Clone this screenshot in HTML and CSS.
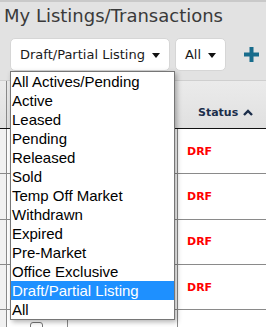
FILE: index.html
```html
<!DOCTYPE html>
<html lang="en">
<head>
    <meta charset="UTF-8">
    <title>My Listings/Transactions</title>
    <link rel="stylesheet" href="styles.css">
</head>
<body>

    <div class="topbar"></div>
    <h1 class="title">My Listings/Transactions</h1>

    <!-- Filter toolbar -->
    <div class="toolbar">
        <button class="drop">Draft/Partial Listing <span class="caret"></span></button>
        <button class="drop">All <span class="caret"></span></button>
        <svg class="add" width="15" height="15" viewBox="0 0 15 15">
            <rect x="5.5" y="0" width="4" height="15" fill="#186c8c"/>
            <rect x="0" y="5.5" width="15" height="4" fill="#186c8c"/>
        </svg>
    </div>

    <!-- Listings grid -->
    <div class="grid">
        <div class="row head">
            <div class="cell c0"></div>
            <div class="cell c1"></div>
            <div class="cell c2"></div>
            <div class="cell c3">
                Status
                <svg class="sort" width="10" height="7" viewBox="0 0 10 7">
                    <polyline points="1,6 5,2 9,6" fill="none" stroke="#1c2e4a" stroke-width="2.4"/>
                </svg>
            </div>
        </div>
        <div class="row">
            <div class="cell c0"></div><div class="cell c1"></div><div class="cell c2"></div>
            <div class="cell c3 status">DRF</div>
        </div>
        <div class="row">
            <div class="cell c0"></div><div class="cell c1"></div><div class="cell c2"></div>
            <div class="cell c3 status">DRF</div>
        </div>
        <div class="row">
            <div class="cell c0"></div><div class="cell c1"></div><div class="cell c2"></div>
            <div class="cell c3 status">DRF</div>
        </div>
        <div class="row">
            <div class="cell c0"></div><div class="cell c1"></div><div class="cell c2"></div>
            <div class="cell c3 status">DRF</div>
        </div>
        <div class="row last">
            <div class="cell c0"></div>
            <div class="cell c1"><span class="check"></span></div>
            <div class="cell c2"></div>
            <div class="cell c3"></div>
        </div>
    </div>

    <!-- Open status list -->
    <ul class="listbox">
        <li>All Actives/Pending</li>
        <li>Active</li>
        <li>Leased</li>
        <li>Pending</li>
        <li>Released</li>
        <li>Sold</li>
        <li>Temp Off Market</li>
        <li>Withdrawn</li>
        <li>Expired</li>
        <li>Pre-Market</li>
        <li>Office Exclusive</li>
        <li class="selected">Draft/Partial Listing</li>
        <li>All</li>
    </ul>

</body>
</html>
```

FILE: styles.css
```css
/* Global Styles */
body {
    margin: 0;
    background-color: #e2e2e2;
    font-family: 'DejaVu Sans', Verdana, sans-serif;
    overflow: hidden;
    height: 327px;
    position: relative;
}

.topbar {
    height: 2px;
    background-color: #c9c9c9;
}

.title {
    margin: 3px 0 0 4px;
    font-size: 18px;
    line-height: 21px;
    font-weight: normal;
    color: #3a3a3a;
}

/* Toolbar */
.toolbar {
    display: flex;
    align-items: center;
    gap: 5px;
    margin-top: 12px;
    padding-left: 10px;
}

.drop {
    height: 33px;
    display: flex;
    align-items: center;
    gap: 7px;
    padding: 0 9px;
    background-color: #fff;
    border: 1px solid #d6d6d6;
    border-radius: 5px;
    font-family: 'DejaVu Sans', Verdana, sans-serif;
    font-size: 13px;
    color: #1a1a1a;
}

.caret {
    width: 0;
    height: 0;
    border-left: 4.5px solid transparent;
    border-right: 4.5px solid transparent;
    border-top: 5px solid #111;
    margin-top: 1px;
}

.add {
    margin-left: 13px;
}

/* Grid */
.grid {
    margin-top: 9px;
    border-top: 1px solid #cfcfcf;
    background-color: #fff;
}

.row {
    display: flex;
    height: 44.3px;
    border-bottom: 1px solid #8a8a8a;
}

.row.head {
    height: 47px;
    border-bottom: 1px solid #111;
    background: linear-gradient(#ebebeb, #e0e0e0);
}

.row.last {
    height: 17px;
    border-bottom: none;
}

.cell {
    box-sizing: border-box;
    border-right: 1px solid #8a8a8a;
}

.head .cell {
    border-right-color: transparent;
}

.c0 {
    width: 7px;
    background-color: #f1f1f1;
}

.head .c0 {
    background: none;
    border-right-color: #8a8a8a;
}

.c1 {
    width: 61px;
}

.c2 {
    width: 110px;
}

.c3 {
    flex: 1;
    border-right: none;
}

.head .c3 {
    display: flex;
    align-items: flex-end;
    gap: 5px;
    padding: 0 0 9px 20px;
    font-size: 11px;
    line-height: 13px;
    font-weight: bold;
    color: #1c2e4a;
}

.sort {
    margin-bottom: 3px;
}

.status {
    display: flex;
    align-items: center;
    padding-left: 9px;
    font-size: 11px;
    font-weight: bold;
    color: #f00;
}

.check {
    display: block;
    width: 11px;
    height: 11px;
    margin: 12px 0 0 23px;
    border: 1px solid #777;
    border-radius: 3px;
    background-color: #fff;
}

/* Open select list */
.listbox {
    position: absolute;
    left: 10px;
    top: 71px;
    width: 165px;
    box-sizing: border-box;
    margin: 0;
    padding: 0;
    list-style: none;
    background-color: #fff;
    border: 1px solid #767676;
    box-shadow: 2px 2px 5px rgba(0, 0, 0, 0.3);
    font-family: 'Liberation Sans', Arial, sans-serif;
    font-size: 15px;
    line-height: 19px;
    color: #000;
}

.listbox li {
    padding-left: 1px;
    white-space: nowrap;
}

.listbox .selected {
    background-color: #1e90ff;
    color: #fff;
}
```
